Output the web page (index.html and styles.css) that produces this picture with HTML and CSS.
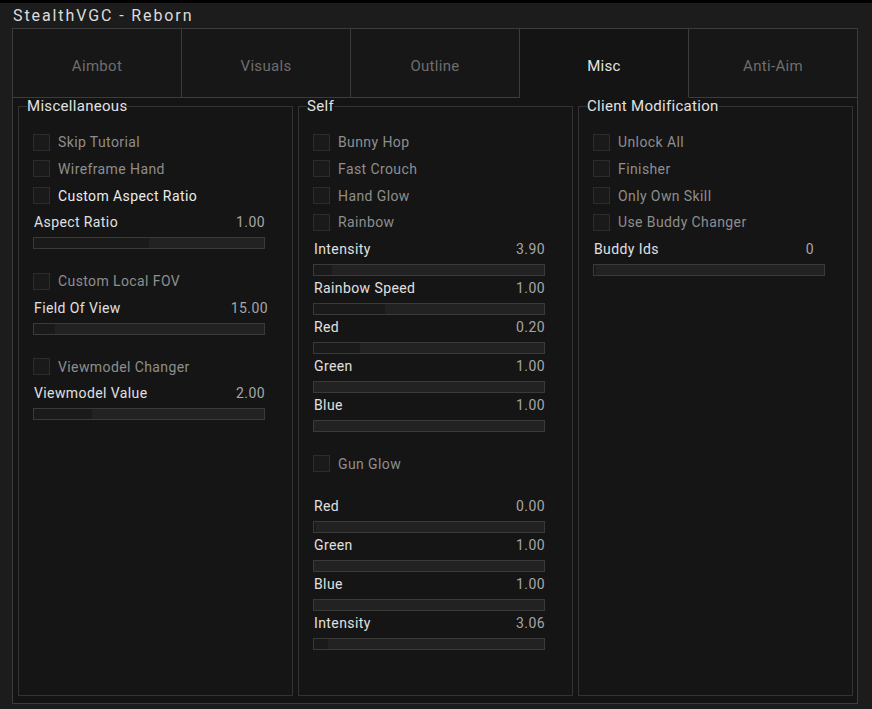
FILE: index.html
```html
<!doctype html>
<html>
<head>
  <meta charset="utf-8">
  <title>StealthVGC - Reborn</title>
  <link rel="stylesheet" href="styles.css">
</head>
<body>
<div class="window">
  <div class="window-title">StealthVGC - Reborn</div>
  <div class="frame">
    <div class="tabs">
      <div class="tab">Aimbot</div>
      <div class="tab">Visuals</div>
      <div class="tab">Outline</div>
      <div class="tab active">Misc</div>
      <div class="tab">Anti-Aim</div>
    </div>
    <div class="groups">
      <!-- left column -->
      <fieldset class="group">
        <legend>Miscellaneous</legend>
        <div class="check"><span class="box"></span><span class="check-label">Skip Tutorial</span></div>
        <div class="check"><span class="box"></span><span class="check-label">Wireframe Hand</span></div>
        <div class="check"><span class="box"></span><span class="check-label on">Custom Aspect Ratio</span></div>
        <div class="slider">
          <div class="slider-head"><span>Aspect Ratio</span><span class="slider-value">1.00</span></div>
          <div class="slider-track"><div class="slider-fill" style="width: 50%"></div></div>
        </div>
        <div class="spacer"></div>
        <div class="check"><span class="box"></span><span class="check-label">Custom Local FOV</span></div>
        <div class="slider">
          <div class="slider-head"><span>Field Of View</span><span class="slider-value wide">15.00</span></div>
          <div class="slider-track"><div class="slider-fill" style="width: 9%"></div></div>
        </div>
        <div class="spacer"></div>
        <div class="check"><span class="box"></span><span class="check-label">Viewmodel Changer</span></div>
        <div class="slider">
          <div class="slider-head"><span>Viewmodel Value</span><span class="slider-value">2.00</span></div>
          <div class="slider-track"><div class="slider-fill" style="width: 25%"></div></div>
        </div>
      </fieldset>

      <!-- middle column -->
      <fieldset class="group">
        <legend>Self</legend>
        <div class="check"><span class="box"></span><span class="check-label">Bunny Hop</span></div>
        <div class="check"><span class="box"></span><span class="check-label">Fast Crouch</span></div>
        <div class="check"><span class="box"></span><span class="check-label">Hand Glow</span></div>
        <div class="check"><span class="box"></span><span class="check-label">Rainbow</span></div>
        <div class="slider">
          <div class="slider-head"><span>Intensity</span><span class="slider-value">3.90</span></div>
          <div class="slider-track"><div class="slider-fill" style="width: 8%"></div></div>
        </div>
        <div class="slider">
          <div class="slider-head"><span>Rainbow Speed</span><span class="slider-value">1.00</span></div>
          <div class="slider-track"><div class="slider-fill" style="width: 31%"></div></div>
        </div>
        <div class="slider">
          <div class="slider-head"><span>Red</span><span class="slider-value">0.20</span></div>
          <div class="slider-track"><div class="slider-fill" style="width: 20%"></div></div>
        </div>
        <div class="slider">
          <div class="slider-head"><span>Green</span><span class="slider-value">1.00</span></div>
          <div class="slider-track"></div>
        </div>
        <div class="slider">
          <div class="slider-head"><span>Blue</span><span class="slider-value">1.00</span></div>
          <div class="slider-track"></div>
        </div>
        <div class="spacer"></div>
        <div class="check"><span class="box"></span><span class="check-label">Gun Glow</span></div>
        <div class="spacer"></div>
        <div class="slider">
          <div class="slider-head"><span>Red</span><span class="slider-value">0.00</span></div>
          <div class="slider-track"><div class="slider-fill" style="width: 2px"></div></div>
        </div>
        <div class="slider">
          <div class="slider-head"><span>Green</span><span class="slider-value">1.00</span></div>
          <div class="slider-track"></div>
        </div>
        <div class="slider">
          <div class="slider-head"><span>Blue</span><span class="slider-value">1.00</span></div>
          <div class="slider-track"></div>
        </div>
        <div class="slider">
          <div class="slider-head"><span>Intensity</span><span class="slider-value">3.06</span></div>
          <div class="slider-track"><div class="slider-fill" style="width: 6%"></div></div>
        </div>
      </fieldset>

      <!-- right column -->
      <fieldset class="group">
        <legend>Client Modification</legend>
        <div class="check"><span class="box"></span><span class="check-label">Unlock All</span></div>
        <div class="check"><span class="box"></span><span class="check-label">Finisher</span></div>
        <div class="check"><span class="box"></span><span class="check-label">Only Own Skill</span></div>
        <div class="check"><span class="box"></span><span class="check-label">Use Buddy Changer</span></div>
        <div class="slider">
          <div class="slider-head"><span>Buddy Ids</span><span class="slider-value int">0</span></div>
          <div class="slider-track"><div class="slider-fill" style="width: 2px"></div></div>
        </div>
      </fieldset>
    </div>
  </div>
</div>
</body>
</html>
```

FILE: styles.css
```css
html,
body {
  background: #1c1c1c;
  height: 100%;
  margin: 0;
}
body {
  border-top: 3px solid #000;
  box-sizing: border-box;
  color: #e0e0e0;
  font-family: Roboto, "Liberation Sans", sans-serif;
  font-size: 14px;
}
.window {
  padding: 0 14px 0 12px;
}
.window-title {
  color: #dcdcdc;
  font-size: 16px;
  height: 25px;
  letter-spacing: 1.9px;
  line-height: 25px;
  padding-left: 1px;
}
/* outer frame holding tabs and group boxes */
.frame {
  background: #141414;
  border: 1px solid #3c3c3c;
  box-sizing: border-box;
  display: flex;
  flex-direction: column;
  height: 676px;
  width: 846px;
}
.tabs {
  display: grid;
  grid-template-columns: 169px 169px 169px 169px 1fr;
  height: 69px;
}
.tab {
  align-items: center;
  background: #171717;
  border-bottom: 1px solid #3c3c3c;
  border-right: 1px solid #3c3c3c;
  box-sizing: border-box;
  color: #6e6e6e;
  display: flex;
  font-size: 15px;
  justify-content: center;
  letter-spacing: 0.3px;
  padding-top: 5px;
}
.tab:last-child {
  border-right: none;
}
.tab.active {
  background: #141414;
  border-bottom-color: transparent;
  color: #e4e4e4;
}
.groups {
  display: grid;
  flex-grow: 1;
  gap: 5px;
  grid-template-columns: repeat(3, 275px);
  padding: 0 4px 7px 5px;
}
.group {
  background: #151515;
  border: 1px solid #333;
  margin: 0;
  min-width: 0;
  padding: 15px 14px 0 14px;
}
.group legend {
  color: #e2e2e2;
  font-size: 15px;
  letter-spacing: 0.3px;
  line-height: 16px;
  margin-left: -6px;
  padding: 0;
}
.check {
  align-items: center;
  display: flex;
  height: 26.67px;
}
.box {
  background: #1a1a1a;
  border: 1px solid #2c2c2c;
  box-sizing: border-box;
  height: 17px;
  width: 17px;
}
.check-label {
  color: #8e8e8e;
  letter-spacing: 0.4px;
  margin-left: 8px;
}
.check-label.on {
  color: #ececec;
}
.slider {
  margin-bottom: 1px;
  width: 232px;
}
/* a slider straight after a checkbox sits a little lower */
.check + .slider {
  margin-top: 2px;
}
.slider-head {
  display: flex;
  height: 22px;
  justify-content: space-between;
  letter-spacing: 0.4px;
  line-height: 22px;
  padding-left: 1px;
}
.slider-value {
  color: #a6a6a6;
}
.slider-value.wide {
  margin-right: -3px;
}
.slider-value.int {
  margin-right: 11px;
}
.slider-track {
  background: #222;
  border: 1px solid #3a3a3a;
  box-sizing: border-box;
  height: 12px;
  margin-top: 4px;
}
.slider-fill {
  background: #1a1a1a;
  height: 100%;
}
.spacer {
  height: 18px;
}
```
